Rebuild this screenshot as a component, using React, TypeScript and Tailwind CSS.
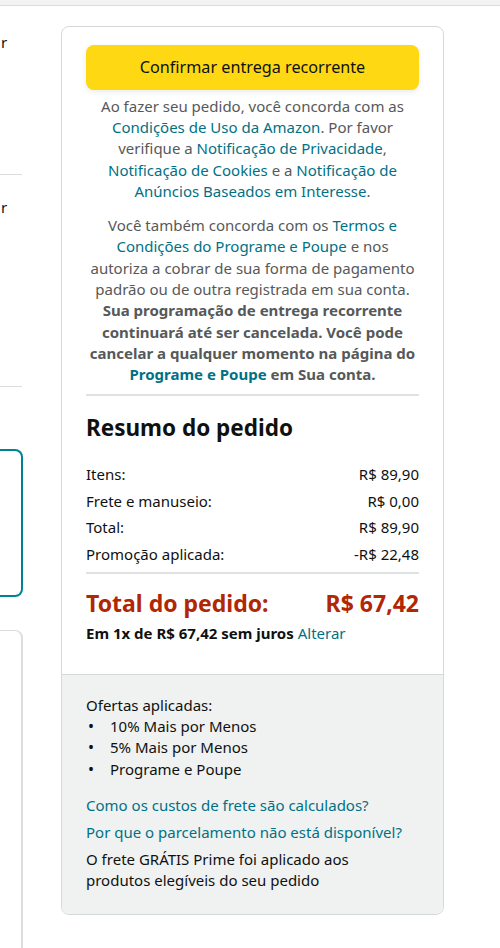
import { FC } from "react";

const font = { fontFamily: '"Noto Sans", "Open Sans", Arial, sans-serif' };

const Row: FC<{ label: string; value: string }> = ({ label, value }) => (
  <div className="flex justify-between">
    <span>{label}</span>
    <span>{value}</span>
  </div>
);

const Bullet: FC<{ text: string }> = ({ text }) => (
  <li className="flex">
    <span className="w-[24px] pl-[2px] text-[16px]">•</span>
    <span>{text}</span>
  </li>
);

const LeftColumn: FC = () => {
  return (
    <div className="w-[23px] shrink-0 flex flex-col text-[15px] text-[#0F1111]">
      <div className="mt-[26px] leading-[21px] pl-[1px]">r</div>
      <div className="mt-[121px] h-px w-[22px] bg-[#dddddd]" />
      <div className="mt-[22px] leading-[21px] pl-[1px]">r</div>
      <div className="mt-[168px] h-px w-[22px] bg-[#dddddd]" />
      <div className="mt-[62px] h-[148px] w-[23px] border-y-2 border-r-2 border-[#008296] rounded-r-lg" />
      <div className="mt-[33px] h-[330px] w-[23px] border-t border-r-2 border-[#dddddd] rounded-tr-lg" />
    </div>
  );
};

const App: FC = () => {
  return (
    <div className="min-h-[948px] bg-white overflow-hidden" style={font}>
      <div className="h-[6px] bg-[#f3f3f3] border-b border-[#dddddd]" />
      <div className="flex items-start">
        <LeftColumn />
        <div className="ml-[38px] mt-[20px] w-[383px] shrink-0 border border-[#d5d9d9] rounded-lg">
          <div className="px-6 pt-[18px] pb-[30px]">
            <button className="w-full h-[45px] rounded-lg bg-[#FFD814] text-[16.2px] text-[#0F1111] shadow-[0_2px_5px_0_rgba(213,217,217,0.5)]">
              Confirmar entrega recorrente
            </button>
            <p className="mt-[6px] text-center text-[15px] leading-[21.2px] text-[#565959]">
              Ao fazer seu pedido, você concorda com as{" "}
              <span className="text-[#007185]">Condições de Uso da Amazon</span>. Por favor verifique a{" "}
              <span className="text-[#007185]">Notificação de Privacidade</span>,{" "}
              <span className="text-[#007185]">Notificação de Cookies</span> e a{" "}
              <span className="text-[#007185]">Notificação de Anúncios Baseados em Interesse</span>.
            </p>
            <p className="mt-[13px] text-center text-[15px] leading-[21.3px] text-[#565959]">
              Você também concorda com os{" "}
              <span className="text-[#007185]">Termos e Condições do Programe e Poupe</span> e nos autoriza a
              cobrar de sua forma de pagamento padrão ou de outra registrada em sua conta.{" "}
              <b>
                Sua programação de entrega recorrente continuará até ser cancelada. Você pode cancelar a
                qualquer momento na página do <span className="text-[#007185]">Programe e Poupe</span> em Sua
                conta.
              </b>
            </p>
            <div className="mt-[9px] h-[2px] bg-[#dfe2e2]" />
            <h2 className="mt-[18px] text-[22.5px] leading-[28px] font-bold text-[#0F1111]">Resumo do pedido</h2>
            <div className="mt-[22px] flex flex-col gap-[5.5px] text-[15px] leading-[21px] text-[#0F1111]">
              <Row label="Itens:" value="R$ 89,90" />
              <Row label="Frete e manuseio:" value="R$ 0,00" />
              <Row label="Total:" value="R$ 89,90" />
              <Row label="Promoção aplicada:" value="-R$ 22,48" />
            </div>
            <div className="mt-[7px] h-[2px] bg-[#dfe2e2]" />
            <div className="mt-[15px] flex justify-between text-[23px] leading-[28px] font-bold text-[#B12704]">
              <span>Total do pedido:</span>
              <span>R$ 67,42</span>
            </div>
            <p className="mt-[6px] text-[15px] leading-[21px] text-[#0F1111]">
              <b>Em 1x de R$ 67,42 sem juros</b> <span className="text-[#007185]">Alterar</span>
            </p>
          </div>
          <div className="border-t border-[#d5d9d9] bg-[#f0f2f2] rounded-b-lg px-6 pt-[20px] pb-[23px] text-[15px] leading-[21.3px] text-[#0F1111]">
            <p>Ofertas aplicadas:</p>
            <ul>
              <Bullet text="10% Mais por Menos" />
              <Bullet text="5% Mais por Menos" />
              <Bullet text="Programe e Poupe" />
            </ul>
            <p className="mt-[15px] text-[#007185]">Como os custos de frete são calculados?</p>
            <p className="mt-[5.5px] text-[#007185]">Por que o parcelamento não está disponível?</p>
            <p className="mt-[5.5px] max-w-[300px]">
              O frete GRÁTIS Prime foi aplicado aos produtos elegíveis do seu pedido
            </p>
          </div>
        </div>
      </div>
    </div>
  );
};

export default App;
